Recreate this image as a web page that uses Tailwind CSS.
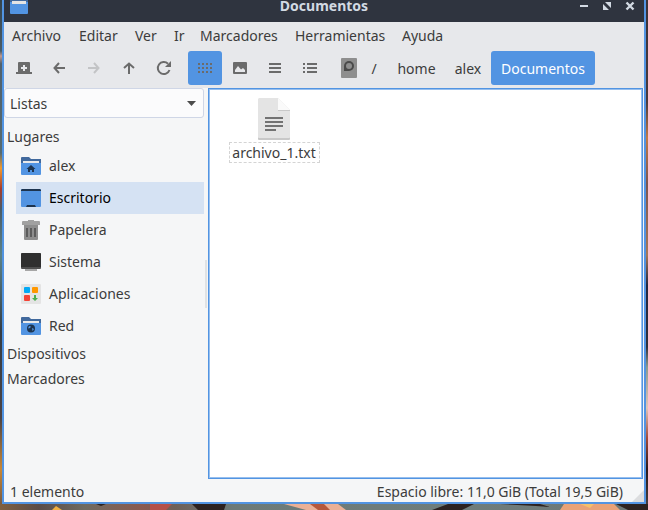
<!DOCTYPE html>
<html lang="es">
<head>
<meta charset="utf-8">
<title>Documentos</title>
<script src="https://cdn.jsdelivr.net/npm/@tailwindcss/browser@4"></script>
</head>
<body class="h-screen overflow-hidden font-['Noto_Sans','Open_Sans',sans-serif] text-sm leading-5 text-[#3c3c3c]">
<div class="relative flex h-full flex-col bg-[#5e686b] px-0.5 pb-1.5">
  <!-- Desktop wallpaper around the window -->
  <svg class="absolute inset-y-0 left-0 h-full w-0.5" viewBox="0 0 2 510" preserveAspectRatio="none" aria-hidden="true">
    <defs><linearGradient id="wl" x1="0" y1="0" x2="0" y2="1"><stop offset="0" stop-color="#34444d"/><stop offset=".1" stop-color="#4b5c67"/><stop offset=".11" stop-color="#c09a90"/><stop offset=".125" stop-color="#50606c"/><stop offset=".3" stop-color="#566a70"/><stop offset=".33" stop-color="#f49a2c"/><stop offset=".37" stop-color="#a83c2a"/><stop offset=".41" stop-color="#4a5b66"/><stop offset=".5" stop-color="#5b8288"/><stop offset=".65" stop-color="#343c44"/><stop offset=".82" stop-color="#4b4345"/><stop offset=".92" stop-color="#c98735"/><stop offset="1" stop-color="#6b5341"/></linearGradient></defs>
    <path d="M0 0h2v510H0z" fill="url(#wl)"/>
  </svg>
  <svg class="absolute inset-y-0 right-0 h-full w-0.5" viewBox="0 0 2 510" preserveAspectRatio="none" aria-hidden="true">
    <defs><linearGradient id="wr" x1="0" y1="0" x2="0" y2="1"><stop offset="0" stop-color="#3a3238"/><stop offset=".2" stop-color="#4a3a3c"/><stop offset=".27" stop-color="#c07a48"/><stop offset=".36" stop-color="#7c5550"/><stop offset=".5" stop-color="#a5785a"/><stop offset=".56" stop-color="#22263e"/><stop offset=".68" stop-color="#30303a"/><stop offset=".72" stop-color="#8a9a90"/><stop offset=".8" stop-color="#e0c4b8"/><stop offset=".86" stop-color="#a04a38"/><stop offset=".92" stop-color="#2a1818"/><stop offset="1" stop-color="#4a4444"/></linearGradient></defs>
    <path d="M0 0h2v510H0z" fill="url(#wr)"/>
  </svg>
  <svg class="absolute inset-x-0 bottom-0 h-1.5 w-full" viewBox="0 0 648 6" preserveAspectRatio="none" aria-hidden="true">
    <defs><linearGradient id="wb"><stop offset="0" stop-color="#80603f"/><stop offset=".06" stop-color="#5a4c48"/><stop offset=".13" stop-color="#6e6a60"/><stop offset=".22" stop-color="#8a5a50"/><stop offset=".27" stop-color="#6e6058"/><stop offset=".36" stop-color="#6c7a78"/><stop offset=".7" stop-color="#6f7d7b"/><stop offset="1" stop-color="#6c7674"/></linearGradient></defs>
    <path d="M0 0h648v6H0z" fill="url(#wb)"/>
    <path d="M96 0h10l-5 2zM192 0h34l-2 6h-26zM432 6l16-6h26l-12 6zM500 0h40l10 3-14-1zM616 0h32v6h-20z" fill="#2c2220"/>
    <path d="M150 0h22l-6 6h-16z" fill="#b4504a"/><path d="M284 0h54l8 6h-40z" fill="#eab096"/><path d="M310 0h14l6 6h-12z" fill="#b5583c"/>
    <path d="M560 6l4-6h50l6 6z" fill="#e9a277"/><path d="M580 0h14l-4 4z" fill="#f5c06c"/><path d="M52 6l4-4 6 4z" fill="#f0b040"/>
  </svg>

  <main class="relative flex min-h-0 flex-1 flex-col border-x-2 border-b-2 border-[#5294e2] bg-[#f5f6f7]">
    <header class="relative flex h-[22px] shrink-0 items-start bg-[#2f343f] text-[#d3dae3]">
      <svg class="ml-1.5 h-3.5 w-[18px]" viewBox="0 0 18 14" aria-hidden="true"><path d="M0 0h18v13a1 1 0 0 1-1 1H1a1 1 0 0 1-1-1z" fill="#5294e2"/><path d="M0 0h18v2H0z" fill="#41699d"/><path d="M2 1h14v3H2z" fill="#e4e4e4"/></svg>
      <h1 class="absolute inset-x-0 top-0 text-center leading-3 font-bold">Documentos</h1>
      <div class="relative ml-auto flex gap-3 pr-[9px]">
        <button aria-label="Minimizar" class="h-3 w-[11px]"><svg class="h-3 w-[11px]" viewBox="0 0 11 12"><path d="M2 5h8v2H2z" fill="currentColor"/></svg></button>
        <button aria-label="Maximizar" class="h-3 w-[11px]"><svg class="h-3 w-[11px]" viewBox="0 0 11 12"><path d="M4 2h6v6zM2 4l6 6H2z" fill="currentColor"/></svg></button>
        <button aria-label="Cerrar" class="h-3 w-[11px]"><svg class="h-3 w-[11px]" viewBox="0 0 11 12"><path d="M2.500 2.500l7 7M9.500 2.500l-7 7" stroke="currentColor" stroke-width="2.400"/></svg></button>
      </div>
    </header>

    <div class="shrink-0 bg-[#e7e8eb] pb-[3px]">
      <nav class="flex h-[29px] items-center gap-4 pb-0.5 pl-2" aria-label="Menú">
        <button class="w-[51px] text-left whitespace-nowrap">Archivo</button>
        <button class="w-10 text-left whitespace-nowrap">Editar</button>
        <button class="w-[23px] text-left whitespace-nowrap">Ver</button>
        <button class="w-2.5 text-left whitespace-nowrap">Ir</button>
        <button class="w-[79px] text-left whitespace-nowrap">Marcadores</button>
        <button class="w-[91px] text-left whitespace-nowrap">Herramientas</button>
        <button class="text-left whitespace-nowrap">Ayuda</button>
      </nav>
      <div class="flex h-[34px] items-center pl-[3px] text-[#6b6b6b]">
        <div class="flex gap-px">
          <button aria-label="Nueva pestaña" class="flex size-[34px] items-center justify-center"><svg class="size-4" viewBox="0 0 16 16"><path fill-rule="evenodd" d="M3 2h10a1 1 0 0 1 1 1v9h2v2H0v-2h2V3a1 1 0 0 1 1-1zM7 5v2H5v2h2v2h2V9h2V7H9V5z" fill="currentColor"/></svg></button>
          <button aria-label="Atrás" class="flex size-[34px] items-center justify-center"><svg class="size-4" viewBox="0 0 16 16"><path d="M14 8H4M8 3L3.500 8 8 13" fill="none" stroke="currentColor" stroke-width="2"/></svg></button>
          <button aria-label="Adelante" disabled class="flex size-[34px] items-center justify-center text-[#c3c4c6]"><svg class="size-4" viewBox="0 0 16 16"><path d="M2 8h10M8 3l4.500 5L8 13" fill="none" stroke="currentColor" stroke-width="2"/></svg></button>
          <button aria-label="Subir" class="flex size-[34px] items-center justify-center"><svg class="size-4" viewBox="0 0 16 16"><path d="M8 14V4M3 8l5-4.500L13 8" fill="none" stroke="currentColor" stroke-width="2"/></svg></button>
          <button aria-label="Recargar" class="flex size-[34px] items-center justify-center"><svg class="size-4" viewBox="0 0 16 16"><path d="M13.500 10A6 6 0 1 1 12 3.700" fill="none" stroke="currentColor" stroke-width="2"/><path d="M15 1v6H9z" fill="currentColor"/></svg></button>
          <button aria-label="Vista de iconos" aria-pressed="true" class="ml-1.5 flex size-[34px] items-center justify-center rounded-[3px] bg-[#5294e2]"><svg class="size-4" viewBox="0 0 16 16"><path d="M1 4h14M1 8h14M1 12h14" stroke="currentColor" stroke-width="2" stroke-dasharray="2 2"/></svg></button>
          <button aria-label="Vista de miniaturas" class="flex size-[34px] items-center justify-center"><svg class="size-4" viewBox="0 0 16 16"><path fill-rule="evenodd" d="M2 2h12a1 1 0 0 1 1 1v10a1 1 0 0 1-1 1H2a1 1 0 0 1-1-1V3a1 1 0 0 1 1-1zM3 12h10v-2l-2-2-2 1.500L6 6 3 10z" fill="currentColor"/></svg></button>
          <button aria-label="Vista compacta" class="flex size-[34px] items-center justify-center"><svg class="size-4" viewBox="0 0 16 16"><path d="M2 4h12M2 8h12M2 12h12" stroke="currentColor" stroke-width="2"/></svg></button>
          <button aria-label="Vista de lista" class="flex size-[34px] items-center justify-center"><svg class="size-4" viewBox="0 0 16 16"><path d="M1 4h2M1 8h2M1 12h2M5 4h10M5 8h10M5 12h10" stroke="currentColor" stroke-width="2"/></svg></button>
        </div>
        <nav class="ml-2 flex gap-px text-[#3c3c3c]" aria-label="Ruta">
          <button aria-label="Sistema de archivos" class="flex h-[34px] w-7 items-center justify-center"><svg class="h-5 w-4" viewBox="0 0 16 20"><rect width="16" height="20" rx="1" fill="#8e8e8e"/><path d="M3 13V8a5 5 0 1 1 5 5z" fill="#4a4a4a"/><circle cx="8" cy="8" r="3" fill="#8e8e8e"/></svg></button>
          <button class="h-[34px] w-5 pt-0.5 text-center">/</button>
          <button class="ml-[3px] h-[34px] w-[57px] pt-0.5 text-center">home</button>
          <button class="h-[34px] w-[44px] pt-0.5 text-center">alex</button>
          <button class="h-[34px] w-[104px] rounded-[3px] bg-[#5294e2] pt-0.5 text-center text-white">Documentos</button>
        </nav>
      </div>
    </div>

    <div class="flex min-h-0 flex-1">
      <aside class="relative w-[204px] shrink-0">
        <div class="relative mr-1">
          <label class="sr-only" for="side">Panel lateral</label>
          <select id="side" class="block h-[30px] w-full appearance-none rounded-[3px] border border-[#cfd6e6] bg-[#fbfbfc] pt-0.5 pl-[5px]"><option>Listas</option></select>
          <svg class="pointer-events-none absolute top-[13px] right-2 h-[5px] w-[9px]" viewBox="0 0 9 5" aria-hidden="true"><path d="M0 0h9L4.500 5z" fill="#4c4c4c"/></svg>
        </div>
        <h2 class="mt-1.5 h-[26px] pl-[3px] leading-[25px]">Lugares</h2>
        <ul class="mr-1 ml-3">
          <li><a href="#alex" class="flex h-8 items-center gap-2 pl-[5px]"><svg class="size-5" viewBox="0 0 20 20" aria-hidden="true"><path d="M0 2a1 1 0 0 1 1-1h7l2 2h10v8H0z" fill="#41699d"/><path d="M2 5h16v4H2z" fill="#e9e9e9"/><path d="M0 7h20v11a1 1 0 0 1-1 1H1a1 1 0 0 1-1-1z" fill="#5294e2"/><path d="M10 9l4.500 4H13v3h-2v-2H9v2H7v-3H5.500z" fill="#1d344f"/></svg>alex</a></li>
          <li><a href="#escritorio" aria-current="page" class="flex h-8 items-center gap-2 bg-[#d5e2f3] pl-[5px] text-black"><svg class="size-5" viewBox="0 0 20 20" aria-hidden="true"><rect y="1" width="20" height="18" rx="1" fill="#5294e2"/><path d="M0 3V2l1-1h18l1 1v1zM6 17h8l1 2H5z" fill="#1d344f"/></svg>Escritorio</a></li>
          <li><a href="#papelera" class="flex h-8 items-center gap-2 pl-[5px]"><svg class="size-5" viewBox="0 0 20 20" aria-hidden="true"><path d="M3 4h14v15a1 1 0 0 1-1 1H4a1 1 0 0 1-1-1z" fill="#8e8e8e"/><path d="M7 0h6v1h5a1 1 0 0 1 1 1v3H1V2a1 1 0 0 1 1-1h5z" fill="#a1a1a1"/><path d="M6 8v9M10 8v9M14 8v9" stroke="#5c5c5c" stroke-width="2"/></svg>Papelera</a></li>
          <li><a href="#sistema" class="flex h-8 items-center gap-2 pl-[5px]"><svg class="size-5" viewBox="0 0 20 20" aria-hidden="true"><path d="M4 16h12v3H4z" fill="#a6a6a6"/><rect width="20" height="16" rx="1" y="1" fill="#4f4f4f"/><path d="M0 2l1-1h18l1 1v13H0z" fill="#2f2f2f"/></svg>Sistema</a></li>
          <li><a href="#aplicaciones" class="flex h-8 items-center gap-2 pl-[5px]"><svg class="size-5" viewBox="0 0 20 20" aria-hidden="true"><rect width="20" height="20" rx="1" fill="#e4e4e4"/><rect x="3" y="3" width="6" height="6" rx="1" fill="#03a9f4"/><rect x="11" y="3" width="6" height="6" rx="1" fill="#ff9800"/><rect x="3" y="11" width="6" height="6" rx="1" fill="#f44336"/><path d="M13 11h2v3h2l-3 3-3-3h2z" fill="#4caf50"/></svg>Aplicaciones</a></li>
          <li><a href="#red" class="flex h-8 items-center gap-2 pl-[5px]"><svg class="size-5" viewBox="0 0 20 20" aria-hidden="true"><path d="M0 2a1 1 0 0 1 1-1h7l2 2h10v8H0z" fill="#41699d"/><path d="M2 5h16v4H2z" fill="#e9e9e9"/><path d="M0 7h20v11a1 1 0 0 1-1 1H1a1 1 0 0 1-1-1z" fill="#5294e2"/><circle cx="10" cy="12.500" r="4" fill="#1d344f"/><path d="M8 10l2 .5L9 12l-2 .5zM11 12l2 1-1.500 2z" fill="#5294e2"/></svg>Red</a></li>
        </ul>
        <h2 class="h-[25px] pl-[3px] leading-6">Dispositivos</h2>
        <h2 class="h-[25px] pl-[3px] leading-6">Marcadores</h2>
        <div class="absolute top-[172px] right-px h-12 w-0.5 bg-[#e0e2e4]"></div>
      </aside>
      <section aria-label="Archivos" class="mr-px flex-1 border border-[#5294e2] bg-white px-[17px] pt-[9px] outline -outline-offset-2 outline-[#5294e2]/60">
        <figure class="flex w-24 flex-col items-center">
          <svg class="h-[42px] w-8" viewBox="0 0 32 42" aria-hidden="true"><path d="M1 1h19l12 12v28a1 1 0 0 1-1 1H1a1 1 0 0 1-1-1V2z" fill="#c8c8c8"/><path d="M1 0h19l12 12v27a1 1 0 0 1-1 1H1a1 1 0 0 1-1-1V1z" fill="#e4e4e4"/><path d="M20 12h12v1H20z" fill="#c8c8c8"/><path d="M20 0l12 12H20z" fill="#fafafa"/><path d="M7 20h18M7 24h18M7 28h18M7 32h11" stroke="#727272" stroke-width="2"/></svg>
          <figcaption class="mt-0.5 w-[91px] border border-dashed border-[#d4d4d4] text-center leading-[19px] whitespace-nowrap">archivo_1.txt</figcaption>
        </figure>
      </section>
    </div>

    <footer class="relative flex h-[23px] shrink-0 items-center justify-between pt-0.5 pr-[21px] pl-1.5">
      <span>1 elemento</span>
      <span>Espacio libre: 11,0 GiB (Total 19,5 GiB)</span>
      <svg class="absolute right-0 bottom-0 size-3" viewBox="0 0 12 12" aria-hidden="true"><path d="M12 0v12H0z" fill="#dcdddf"/></svg>
    </footer>
  </main>
</div>
</body>
</html>
